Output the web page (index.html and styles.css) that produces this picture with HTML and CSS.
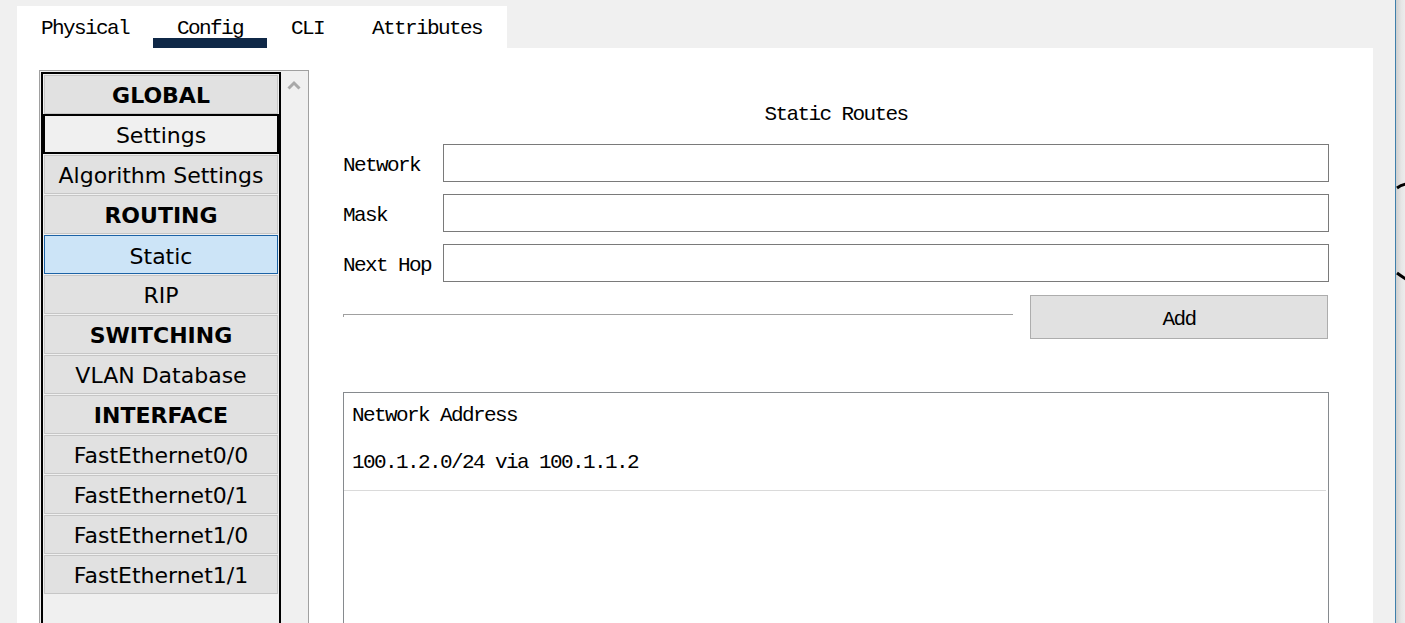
FILE: index.html
```html
<!DOCTYPE html>
<html>
<head>
<meta charset="utf-8">
<link rel="stylesheet" href="styles.css">
</head>
<body>
<div class="app">
  <div class="main">
    <div class="tabs">
      <div class="tab">Physical</div>
      <div class="tab active">Config</div>
      <div class="tab">CLI</div>
      <div class="tab">Attributes</div>
    </div>
    <div class="panel">
      <div class="sidebar">
        <div class="list">
          <div class="item head">GLOBAL</div>
          <div class="item selected">Settings</div>
          <div class="item">Algorithm Settings</div>
          <div class="item head">ROUTING</div>
          <div class="item current">Static</div>
          <div class="item">RIP</div>
          <div class="item head">SWITCHING</div>
          <div class="item">VLAN Database</div>
          <div class="item head">INTERFACE</div>
          <div class="item">FastEthernet0/0</div>
          <div class="item">FastEthernet0/1</div>
          <div class="item">FastEthernet1/0</div>
          <div class="item">FastEthernet1/1</div>
        </div>
        <div class="scrollbar">
          <svg class="chev" width="14" height="10" viewBox="0 0 14 10"><polyline points="1.5,8.5 7,3 12.5,8.5" fill="none" stroke="#a9a9a9" stroke-width="3"/></svg>
        </div>
      </div>
      <div class="content">
        <div class="title">Static Routes</div>
        <div class="form">
          <div class="row"><span class="label">Network</span><div class="input"></div></div>
          <div class="row"><span class="label">Mask</span><div class="input"></div></div>
          <div class="row"><span class="label">Next Hop</span><div class="input"></div></div>
        </div>
        <div class="actions">
          <div class="rule"></div>
          <div class="btn">Add</div>
        </div>
        <div class="routes">
          <div class="routes-head">Network Address</div>
          <div class="route">100.1.2.0/24 via 100.1.1.2</div>
        </div>
      </div>
    </div>
  </div>
  <div class="gutter"></div>
  <div class="edge">
    <svg class="strokes" width="10" height="623" viewBox="0 0 10 623">
      <path d="M1 188 Q5 185 10 184" fill="none" stroke="#000" stroke-width="3"/>
      <path d="M1 273 Q5 276 10 279" fill="none" stroke="#000" stroke-width="3"/>
    </svg>
  </div>
</div>
</body>
</html>
```

FILE: styles.css
```css
* { box-sizing: border-box; }
html, body { margin: 0; padding: 0; }
body {
  background: #f0f0f0;
  width: 1405px;
  height: 623px;
  overflow: hidden;
  font-family: "Liberation Mono", monospace;
  color: #000;
}
.app {
  display: flex;
  height: 623px;
}
.main {
  width: 1373px;
  padding-left: 17px;
  display: flex;
  flex-direction: column;
}
.tabs {
  margin-top: 6px;
  width: 490px;
  height: 42px;
  background: #fff;
  display: flex;
}
.tab {
  padding: 11px 24px 0;
  font-size: 21px;
  letter-spacing: -1.6px;
  line-height: 24px;
  white-space: nowrap;
}
.tab.active {
  border-bottom: 10px solid #0f2847;
  width: 114px;
}
.panel {
  flex: 1;
  background: #fff;
  display: flex;
  padding: 22px 44px 0 22px;
  overflow: hidden;
}
.sidebar {
  width: 270px;
  border: 1px solid #a0a0a0;
  padding: 1px 0 0 1px;
  display: flex;
  margin-bottom: -20px;
  background: #f0f0f0;
}
.list {
  width: 240px;
  border: 2px solid #000;
  background: #f0f0f0;
  font-family: "DejaVu Sans", sans-serif;
  font-size: 22px;
}
.item {
  height: 39px;
  margin: 1px 1px 0;
  padding-top: 3px;
  background: #e1e1e1;
  border: 1px solid #c6c6c6;
  display: flex;
  align-items: center;
  justify-content: center;
  white-space: nowrap;
  line-height: 1;
}
.item.head { font-weight: bold; }
.item.selected {
  height: 40px;
  margin: 0;
  border: 2px solid #000;
  background: #f0f0f0;
}
.item.current {
  background: #cce4f7;
  border-color: #1c63a6;
  padding-top: 5px;
}
.scrollbar {
  width: 27px;
  background: #f0f0f0;
  display: flex;
  justify-content: center;
  padding-top: 8px;
  padding-right: 2px;
}
.chev { display: block; }
.content {
  flex: 1;
  margin-left: 34px;
  display: flex;
  flex-direction: column;
  font-size: 21px;
  letter-spacing: -1.6px;
}
.title {
  text-align: center;
  line-height: 24px;
  margin-top: 33px;
}
.form {
  margin-top: 17px;
  display: flex;
  flex-direction: column;
  gap: 12px;
}
.row {
  display: flex;
  align-items: center;
}
.label {
  width: 100px;
  line-height: 24px;
  padding-top: 6px;
}
.input {
  flex: 1;
  height: 38px;
  border: 1px solid #7a7a7a;
  background: #fff;
}
.actions {
  margin-top: 13px;
  display: flex;
  align-items: flex-start;
}
.rule {
  flex: 1;
  margin-top: 19px;
  margin-right: 17px;
  height: 3px;
  border-top: 1px solid #a0a0a0;
  border-left: 1px solid #a0a0a0;
}
.btn {
  width: 298px;
  height: 44px;
  padding-top: 4px;
  background: #e1e1e1;
  border: 1px solid #adadad;
  display: flex;
  align-items: center;
  justify-content: center;
  margin-right: 1px;
}
.routes {
  margin-top: 53px;
  flex: 1;
  border: 1px solid #868a8e;
  margin-bottom: -20px;
  display: flex;
  flex-direction: column;
}
.routes-head {
  padding: 11px 8px 0;
  line-height: 24px;
}
.route {
  padding: 23px 8px 15px;
  line-height: 24px;
  border-bottom: 1px solid #dadada;
  margin-right: 2px;
}
.gutter {
  width: 22px;
  background: #f0f0f0;
}
.edge {
  position: relative;
  width: 10px;
  border-left: 1px solid #3f7fab;
  background: linear-gradient(to right, #cfcfcf, #e6e6e6 60%, #ececec);
}
.strokes {
  position: absolute;
  left: 0;
  top: 0;
}
```
